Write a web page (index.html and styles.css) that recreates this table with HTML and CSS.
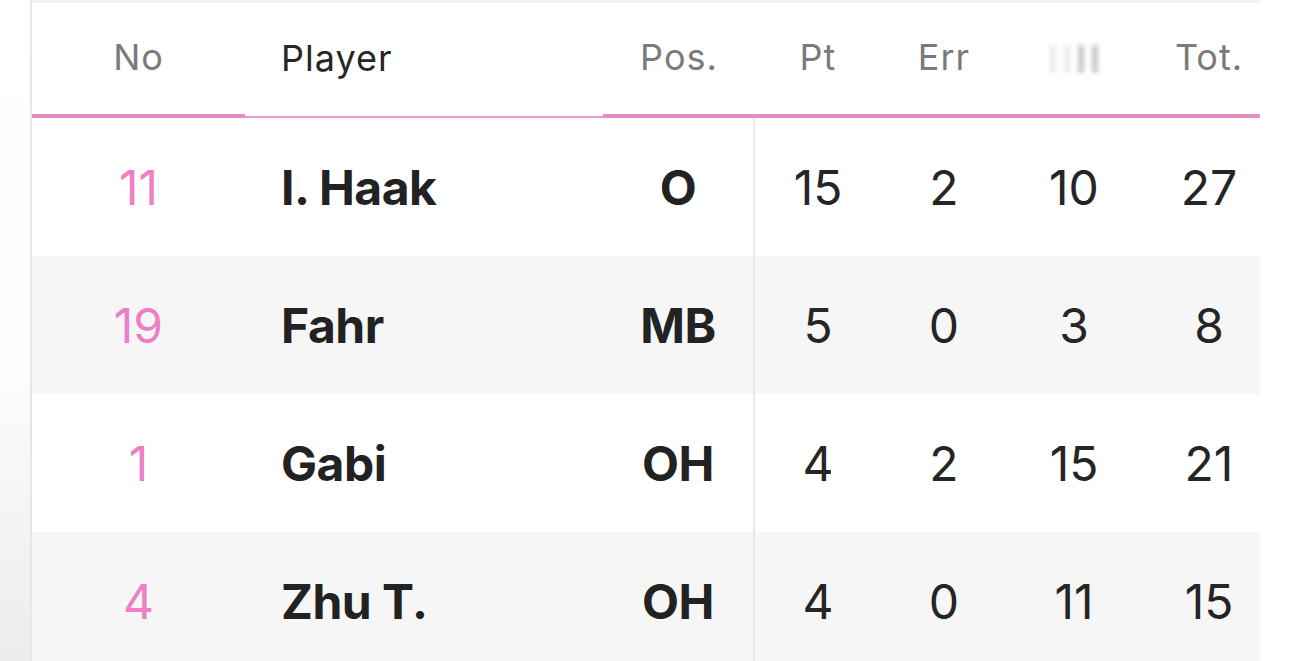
FILE: index.html
```html
<!DOCTYPE html>
<html lang="en">
<head>
<meta charset="utf-8">
<title>Player stats</title>
<link rel="stylesheet" href="styles.css">
</head>
<body>
<div class="page">
  <div class="gutter"></div>
  <div class="stats">
    <div class="row head">
      <div class="cell c-no thick">No</div>
      <div class="cell c-player thin">Player</div>
      <div class="cell c-pos thick">Pos.</div>
      <div class="cell c-num thick">Pt</div>
      <div class="cell c-num thick">Err</div>
      <div class="cell c-num thick"><span class="blurred"><i></i><i></i><i class="dark"></i><i class="dark"></i></span></div>
      <div class="cell c-num c-tot thick">Tot.</div>
    </div>
    <div class="row">
      <div class="cell c-no">11</div>
      <div class="cell c-player">I. Haak</div>
      <div class="cell c-pos">O</div>
      <div class="cell c-num">15</div>
      <div class="cell c-num">2</div>
      <div class="cell c-num">10</div>
      <div class="cell c-num c-tot">27</div>
    </div>
    <div class="row alt">
      <div class="cell c-no">19</div>
      <div class="cell c-player">Fahr</div>
      <div class="cell c-pos">MB</div>
      <div class="cell c-num">5</div>
      <div class="cell c-num">0</div>
      <div class="cell c-num">3</div>
      <div class="cell c-num c-tot">8</div>
    </div>
    <div class="row">
      <div class="cell c-no">1</div>
      <div class="cell c-player">Gabi</div>
      <div class="cell c-pos">OH</div>
      <div class="cell c-num">4</div>
      <div class="cell c-num">2</div>
      <div class="cell c-num">15</div>
      <div class="cell c-num c-tot">21</div>
    </div>
    <div class="row alt">
      <div class="cell c-no">4</div>
      <div class="cell c-player">Zhu T.</div>
      <div class="cell c-pos">OH</div>
      <div class="cell c-num">4</div>
      <div class="cell c-num">0</div>
      <div class="cell c-num">11</div>
      <div class="cell c-num c-tot">15</div>
    </div>
  </div>
  <div class="right"></div>
</div>
</body>
</html>
```

FILE: styles.css
```css
* { box-sizing: border-box; }
html, body { margin: 0; padding: 0; }
body {
  background: #ffffff;
  font-family: Inter, "Liberation Sans", sans-serif;
  color: #222222;
}
.page {
  display: flex;
  height: 661px;
  overflow: hidden;
}
.gutter {
  width: 32px;
  flex: none;
  background: linear-gradient(to bottom, #ffffff 0%, #fdfdfd 55%, #ececec 100%);
  border-right: 2px solid #e6e6e6;
}
.stats {
  width: 1228px;
  flex: none;
  border-top: 3px solid #f1f1f1;
}
.right {
  flex: 1;
  background: #ffffff;
}
.row {
  display: grid;
  grid-template-columns: 213px 358px 152px 126px 126px 134px 119px;
  height: 138px;
  background: #ffffff;
}
.row.alt { background: #f6f6f6; }
.row.head {
  height: 115px;
  background: #ffffff;
}
.cell {
  display: flex;
  align-items: center;
  justify-content: center;
  font-size: 48px;
}
.head .cell {
  font-size: 36px;
  letter-spacing: 1px;
  color: #7a7a7a;
  font-weight: 400;
  padding-bottom: 3px;
}
.head .thick { border-bottom: 4px solid #e58bc9; }
.head .thin { border-bottom: 2px solid #e89ad2; }
.head .c-player { color: #262626; }
.c-no {
  color: #ee7fc7;
  font-weight: 400;
}
.c-player {
  justify-content: flex-start;
  padding-left: 36px;
  font-weight: 700;
  letter-spacing: -0.5px;
}
.c-pos {
  font-weight: 700;
  letter-spacing: -0.5px;
}
.row:not(.head) .c-pos { border-right: 2px solid #e9e9e9; }
.c-num {
  font-weight: 400;
  color: #252525;
}
.c-tot { padding-left: 17px; }
.blurred {
  display: flex;
  gap: 8px;
  align-items: flex-end;
  height: 32px;
  filter: blur(2px);
}
.blurred i {
  display: block;
  width: 6px;
  height: 28px;
  background: #ececec;
}
.blurred i.dark { background: #c9c9c9; }
```
